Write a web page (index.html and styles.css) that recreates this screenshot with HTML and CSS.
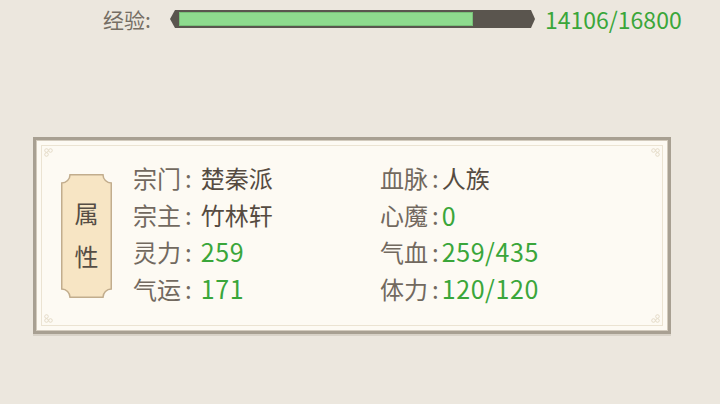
FILE: index.html
```html
<!DOCTYPE html>
<html lang="zh">
<head>
<meta charset="utf-8">
<link rel="stylesheet" href="styles.css">
</head>
<body>
<div class="page">
  <div class="exp-row">
    <span class="exp-label">经验:</span>
    <div class="bar"><div class="fill" style="width:84%"></div></div>
    <span class="exp-value">14106/16800</span>
  </div>

  <div class="panel">
    <div class="frame">
      <svg class="orn orn-tl" width="9" height="9" viewBox="0 0 9 9"><circle cx="2.5" cy="2.5" r="1.8"/><circle cx="6.5" cy="2.5" r="1.8"/><circle cx="2.5" cy="6.5" r="1.8"/></svg>
      <svg class="orn orn-tr" width="9" height="9" viewBox="0 0 9 9"><circle cx="2.5" cy="2.5" r="1.8"/><circle cx="6.5" cy="2.5" r="1.8"/><circle cx="6.5" cy="6.5" r="1.8"/></svg>
      <svg class="orn orn-bl" width="9" height="9" viewBox="0 0 9 9"><circle cx="2.5" cy="2.5" r="1.8"/><circle cx="2.5" cy="6.5" r="1.8"/><circle cx="6.5" cy="6.5" r="1.8"/></svg>
      <svg class="orn orn-br" width="9" height="9" viewBox="0 0 9 9"><circle cx="6.5" cy="2.5" r="1.8"/><circle cx="2.5" cy="6.5" r="1.8"/><circle cx="6.5" cy="6.5" r="1.8"/></svg>

      <div class="tab">
        <svg class="tab-bg" width="51" height="124" viewBox="0 0 51 124"><path d="M9 0.75 H42 A8.25 8.25 0 0 0 50.25 9 V115 A8.25 8.25 0 0 0 42 123.25 H9 A8.25 8.25 0 0 0 0.75 115 V9 A8.25 8.25 0 0 0 9 0.75 Z"/></svg>
        <span class="tab-char">属</span>
        <span class="tab-char">性</span>
      </div>

      <div class="stats">
        <div class="stat"><span class="k">宗门<span class="c">:</span></span><span class="v gap">楚秦派</span></div>
        <div class="stat"><span class="k">血脉<span class="c">:</span></span><span class="v">人族</span></div>
        <div class="stat"><span class="k">宗主<span class="c">:</span></span><span class="v gap">竹林轩</span></div>
        <div class="stat"><span class="k">心魔<span class="c">:</span></span><span class="n">0</span></div>
        <div class="stat"><span class="k">灵力<span class="c">:</span></span><span class="n gap">259</span></div>
        <div class="stat"><span class="k">气血<span class="c">:</span></span><span class="n">259/435</span></div>
        <div class="stat"><span class="k">气运<span class="c">:</span></span><span class="n gap">171</span></div>
        <div class="stat"><span class="k">体力<span class="c">:</span></span><span class="n">120/120</span></div>
      </div>
    </div>
  </div>
</div>
</body>
</html>
```

FILE: styles.css
```css
* { box-sizing: border-box; }

html, body {
  margin: 0;
  padding: 0;
  background: #ece7de;
}

body {
  width: 720px;
  height: 404px;
  overflow: hidden;
  font-family: "Noto Sans CJK SC", "Noto Sans", sans-serif;
}

.page {
  display: flex;
  flex-direction: column;
}

.exp-row {
  display: flex;
  align-items: center;
  height: 38px;
  padding-left: 103px;
}

.exp-label {
  font-size: 21px;
  color: #756e64;
  width: 67px;
}

.bar {
  width: 365px;
  height: 18px;
  background: #5a554e;
  padding: 2px 6px 2px 9px;
  clip-path: polygon(5px 0, calc(100% - 4px) 0, 100% 50%, calc(100% - 4px) 100%, 5px 100%, 0 50%);
}

.fill {
  height: 100%;
  background: #8edb8e;
  border: 1px solid #78c078;
}

.exp-value {
  margin-left: 10px;
  font-size: 23px;
  color: #3aa63a;
}

.panel {
  margin: 99px 0 0 33px;
  width: 638px;
  height: 197px;
  border: 3px solid #a8a092;
  background: #fdfaf3;
  padding: 5px;
  box-shadow: inset 0 0 0 1px #d3cbbd, 0 2px 0 #d8d2c7;
}

.frame {
  position: relative;
  height: 100%;
  border: 1px solid #ebe3d2;
  display: flex;
  align-items: center;
}

.orn {
  position: absolute;
  fill: none;
  stroke: #e2d8c4;
  stroke-width: 0.9;
}
.orn-tl { left: 2px; top: 2px; }
.orn-tr { right: 2px; top: 2px; }
.orn-bl { left: 2px; bottom: 2px; }
.orn-br { right: 2px; bottom: 2px; }

.tab {
  position: relative;
  margin-left: 19px;
  width: 51px;
  height: 124px;
  display: flex;
  flex-direction: column;
  align-items: center;
  justify-content: center;
  gap: 9px;
  padding-bottom: 3px;
}

.tab-bg {
  position: absolute;
  left: 0;
  top: 0;
  fill: #f7e5c4;
  stroke: #c2ad8d;
  stroke-width: 1.5;
}

.tab-char {
  position: relative;
  font-size: 24px;
  line-height: 34px;
  color: #554d44;
}

.stats {
  margin-left: 21px;
  margin-bottom: 5px;
  display: grid;
  grid-template-columns: 247px auto;
  grid-auto-rows: 36.7px;
  font-size: 24px;
}

.stat {
  display: flex;
  align-items: center;
  white-space: nowrap;
}

.k { color: #72695f; }
.c { margin: 0 3px 0 4px; }
.v { color: #554b41; }
.n { color: #3aa63a; font-size: 25px; letter-spacing: 0.6px; }
.gap { margin-left: 6px; }
```
